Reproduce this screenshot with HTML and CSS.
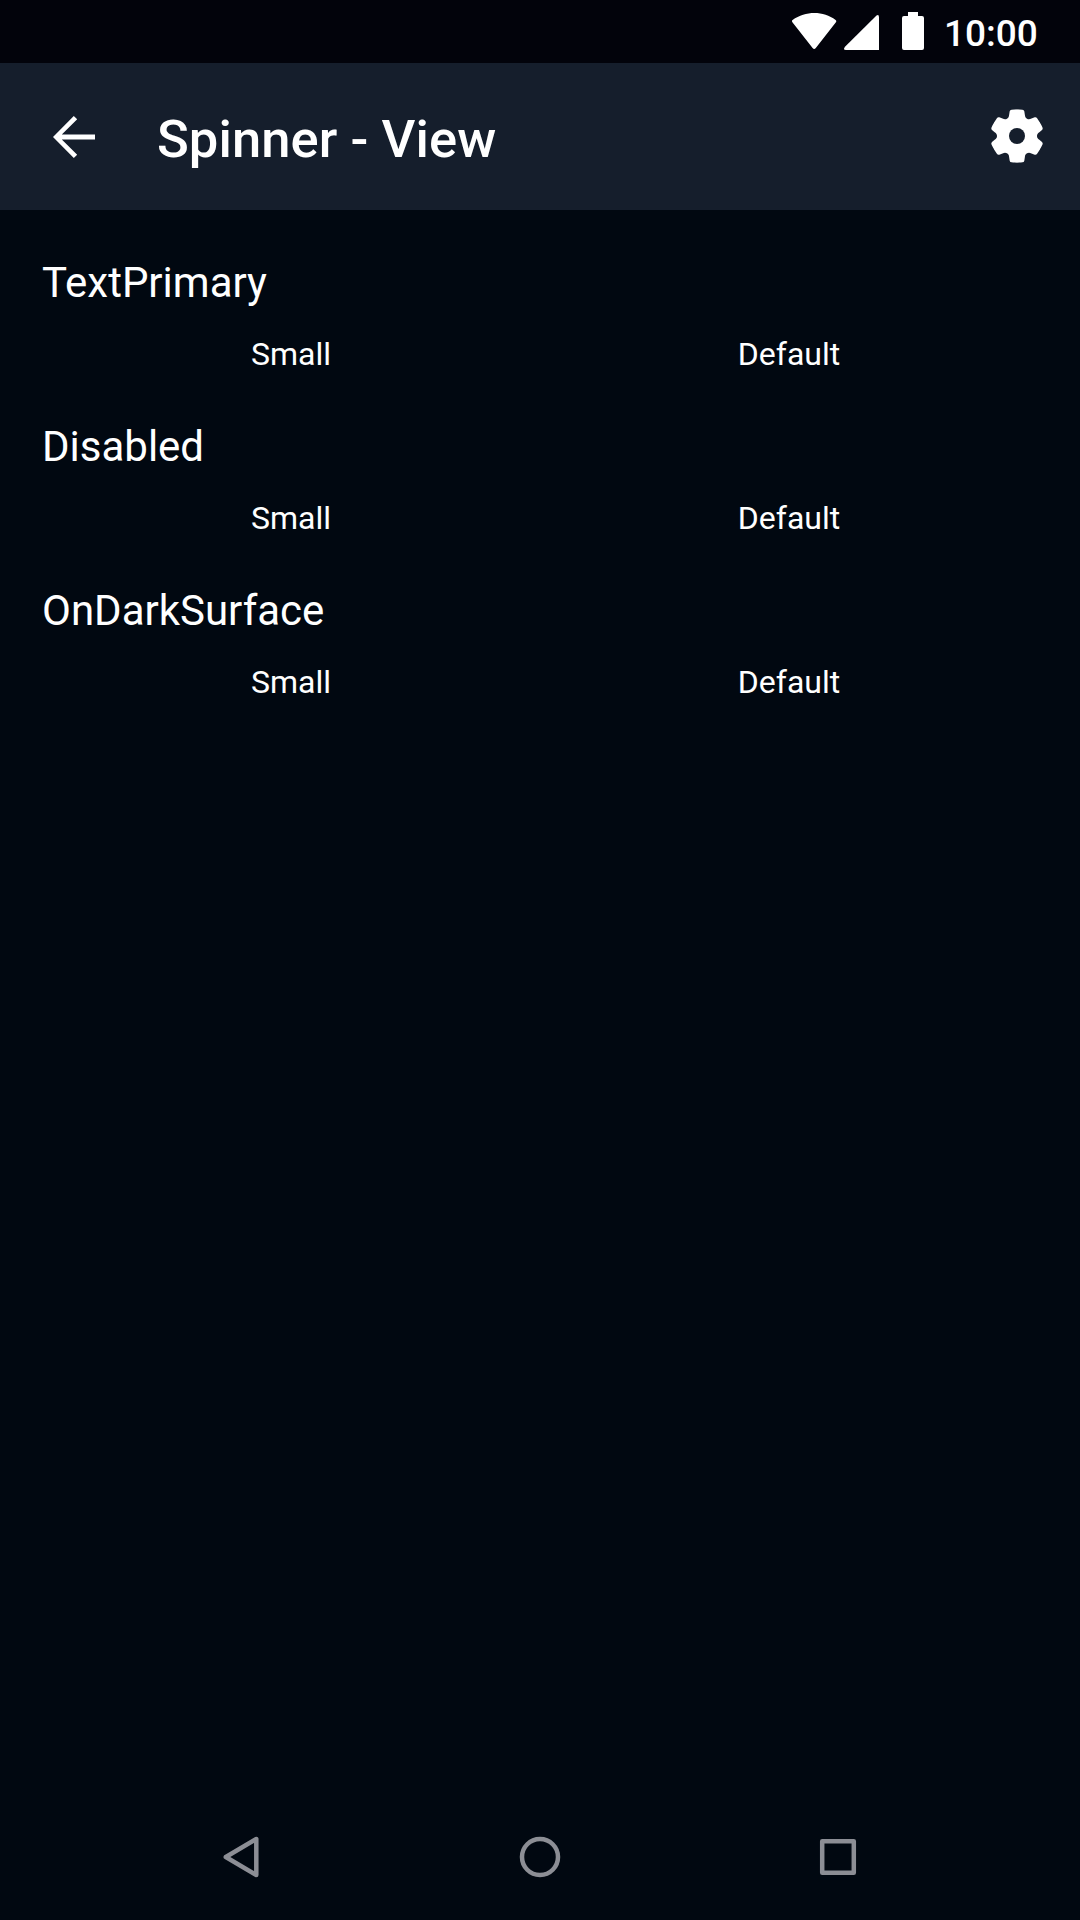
FILE: index.html
```html
<!DOCTYPE html>
<html lang="en">
<head>
<meta charset="utf-8">
<title>Spinner - View</title>
<link rel="stylesheet" href="styles.css">
</head>
<body>
<div class="screen">
  <div class="status-bar">
    <svg class="status-icons" viewBox="0 0 136 63" aria-hidden="true">
      <path d="M0.400 22.200C-0.300 21.500-0.200 20.600 0.600 20C13.500 10.700 31.500 10.700 43.600 20C44.400 20.600 44.500 21.500 43.900 22.200L23.800 48Q22.200 49.900 20.600 48Z"/>
      <path d="M54 50Q50.500 50 53 46.800L84.500 15.600Q87 14 87 17.500V50Z"/>
      <path d="M116 12h10v4h4q2 0 2 2v30q0 2-2 2h-18q-2 0-2-2V18q0-2 2-2h4z"/>
    </svg>
    <span class="clock">10:00</span>
  </div>
  <header class="app-bar">
    <svg class="back" viewBox="0 0 42 42" role="img" aria-label="Back">
      <path d="M0 21L20.800 0L24.200 3.300L8.800 18.600H42V23.400H8.800L24.200 38.700L20.800 42Z"/>
    </svg>
    <h1 class="title">Spinner - View</h1>
    <svg class="settings" viewBox="-81 -81 162 162" role="img" aria-label="Settings">
      <defs>
        <path id="tooth-gap" d="M0 0L65.500-44.200Q73-34 76.500-25.500Q78.500-21 75-18L67-11.500C62-8 60-5 60 0C60 5 62 8 67 11.500L75 18Q78.500 21 76.500 25.500Q73 34 65.500 44.200Z"/>
      </defs>
      <use href="#tooth-gap"/>
      <use href="#tooth-gap" transform="rotate(60)"/>
      <use href="#tooth-gap" transform="rotate(120)"/>
      <use href="#tooth-gap" transform="rotate(180)"/>
      <use href="#tooth-gap" transform="rotate(240)"/>
      <use href="#tooth-gap" transform="rotate(300)"/>
      <circle class="hub" r="24"/>
    </svg>
  </header>
  <main class="content">
    <section class="group">
      <h2 class="heading">TextPrimary</h2>
      <div class="sizes"><span>Small</span><span>Default</span></div>
    </section>
    <section class="group">
      <h2 class="heading">Disabled</h2>
      <div class="sizes"><span>Small</span><span>Default</span></div>
    </section>
    <section class="group">
      <h2 class="heading">OnDarkSurface</h2>
      <div class="sizes"><span>Small</span><span>Default</span></div>
    </section>
  </main>
  <nav class="nav-bar">
    <svg viewBox="0 0 44 44" role="img" aria-label="Back"><path d="M5.800 22L36.300 4V40Z"/></svg>
    <svg viewBox="0 0 44 44" role="img" aria-label="Home"><circle cx="22" cy="22" r="18"/></svg>
    <svg viewBox="0 0 44 44" role="img" aria-label="Recents"><rect x="6.200" y="6.200" width="31.600" height="31.600"/></svg>
  </nav>
</div>
</body>
</html>
```
FILE: styles.css
```css
* { box-sizing: border-box; }

body {
  margin: 0;
  background: #010811;
  color: #fff;
  font-family: Roboto, sans-serif;
}

.screen {
  display: flex;
  flex-direction: column;
  width: 1080px;
  height: 1920px;
}

svg { display: block; flex: none; fill: #fff; }

.status-bar {
  display: flex;
  justify-content: flex-end;
  height: 63px;
  padding-right: 42px;
  background: #02030b;
}

.status-icons { width: 136px; height: 63px; }

.clock {
  width: 94px;
  margin-left: 16px;
  font-size: 37px;
  font-weight: 500;
  line-height: 67px;
  white-space: nowrap;
}

.app-bar {
  display: flex;
  align-items: center;
  height: 147px;
  padding: 0 36.400px 0 52.700px;
  background: #151e2c;
}

.back { width: 42px; height: 42px; }

.title {
  flex: 1;
  margin: 4px 0 0 62.300px;
  font-size: 52.5px;
  font-weight: 500;
  line-height: 64px;
  letter-spacing: 0.080px;
}

.settings { width: 54px; height: 54px; margin-bottom: 2px; }
.hub { fill: #151e2c; }

.content { flex: 1; padding: 45px 42px 0; }

.group { height: 164px; }

.heading {
  margin: 0;
  font-size: 42px;
  font-weight: 400;
  line-height: 56px;
}

.sizes {
  display: grid;
  grid-template-columns: 1fr 1fr;
  padding-top: 22px;
  font-size: 32px;
  line-height: 42px;
  text-align: center;
}

.nav-bar {
  display: flex;
  justify-content: space-between;
  align-items: center;
  height: 126px;
  padding: 0 220px;
}

.nav-bar svg {
  width: 44px;
  height: 44px;
  fill: none;
  stroke: #8c8e95;
  stroke-width: 4.5;
  stroke-linejoin: round;
}
```
